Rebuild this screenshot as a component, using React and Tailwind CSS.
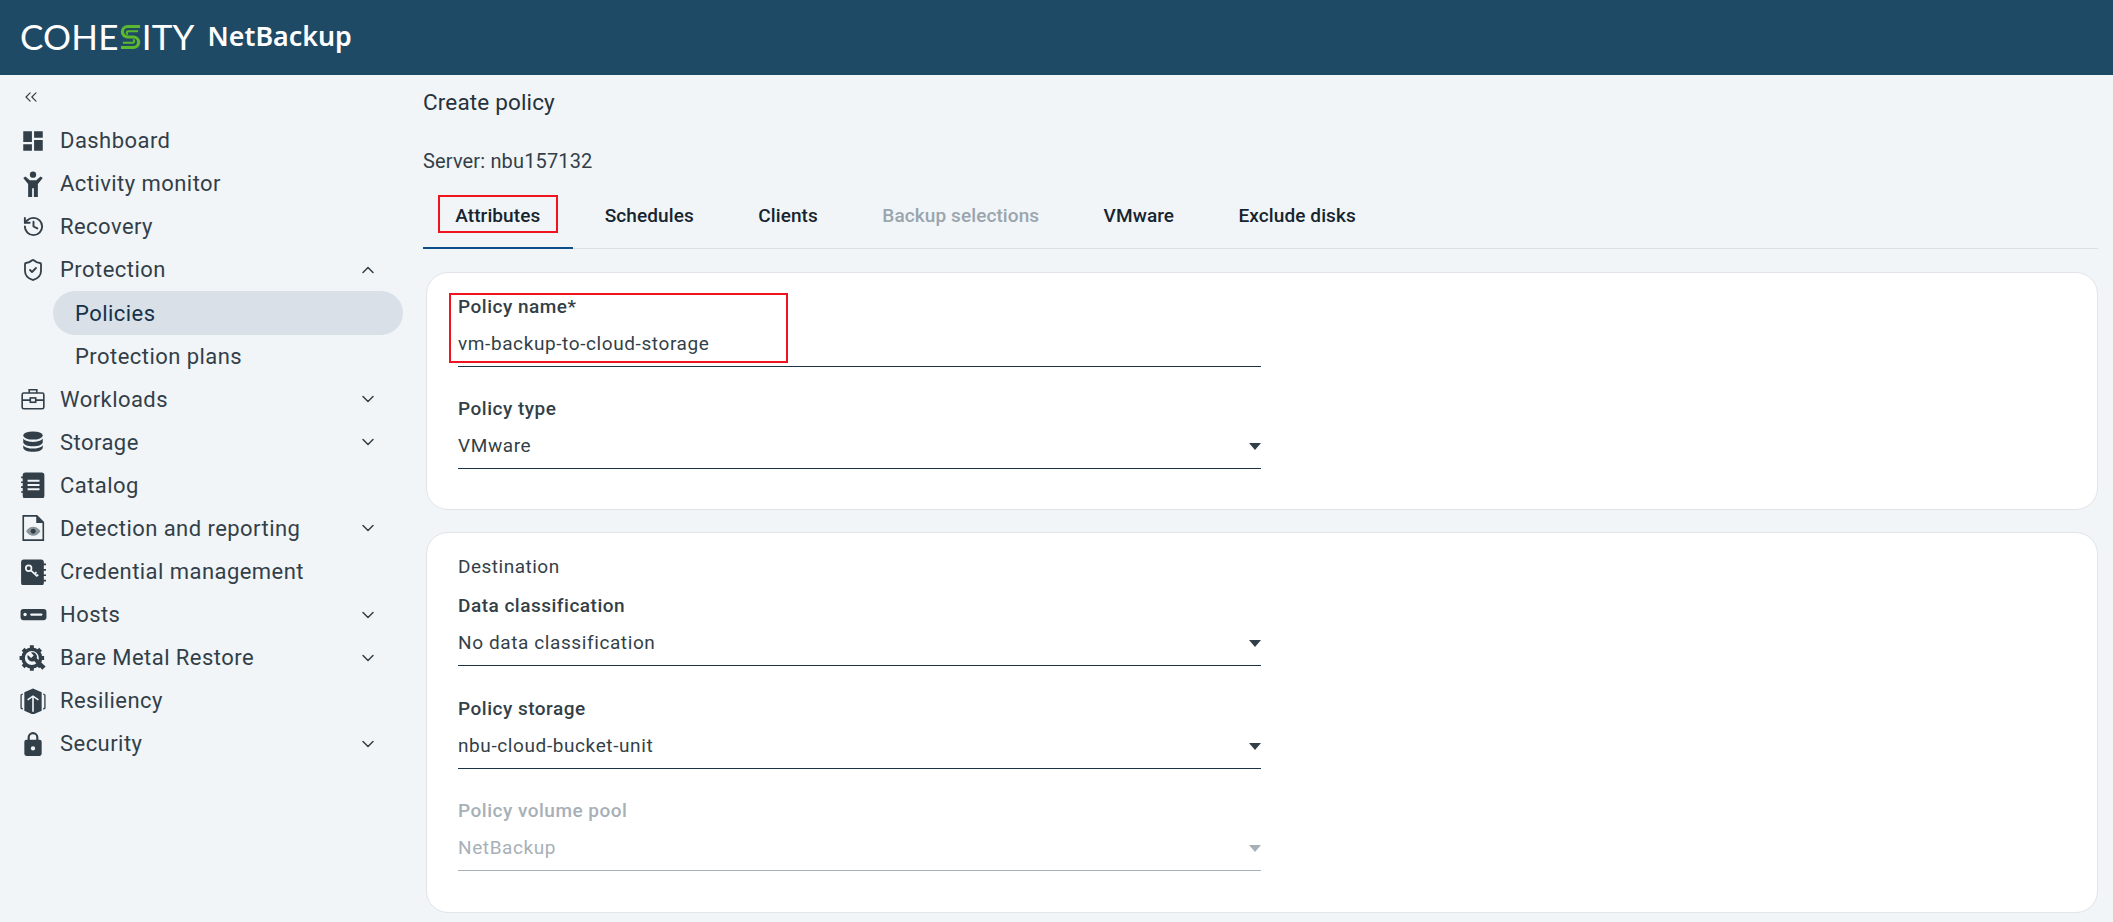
import { ChevronDown, ChevronUp, ChevronsLeft, History, ShieldCheck } from 'lucide-react';

const DashboardIcon = () => (
  <svg viewBox="0 0 24 24" className="w-[26px] h-[26px]" fill="currentColor">
    <path d="M3 13h8V3H3v10zm0 8h8v-6H3v6zm10 0h8V11h-8v10zm0-18v6h8V3h-8z" />
  </svg>
);

const ActivityIcon = () => (
  <svg viewBox="0 0 24 24" className="w-[26px] h-[26px]" fill="currentColor">
    <circle cx="12" cy="3.400" r="2.900" />
    <path d="M3 6.500 5 5l4 3.500h6l4-3.500 2 1.500-4.500 5.500v12h-3.700v-8h-1.600v8H7.500V12z" />
  </svg>
);

const RecoveryIcon = () => <History className="w-[23px] h-[23px]" strokeWidth={2} />;

const ShieldIcon = () => <ShieldCheck className="w-[24px] h-[24px]" strokeWidth={1.800} />;

const WorkloadsIcon = () => (
  <svg viewBox="0 0 24 24" className="w-[26px] h-[26px]" fill="none" stroke="currentColor" strokeWidth="1.500">
    <rect x="2" y="6.500" width="20" height="14.500" rx="1.500" />
    <path d="M8.500 6.500V3.500h7v3M2 13h7.500M14.500 13H22" />
    <rect x="9.500" y="11" width="5" height="4" />
  </svg>
);

const StorageIcon = () => (
  <svg viewBox="0 0 24 24" className="w-[26px] h-[26px]" fill="currentColor">
    <ellipse cx="12" cy="6" rx="9" ry="3.800" />
    <path d="M3 8.800c1.200 2 5 3.100 9 3.100s7.800-1.100 9-3.100v3.400c0 2.100-4 3.800-9 3.800s-9-1.700-9-3.800z" />
    <path d="M3 15c1.200 2 5 3.100 9 3.100s7.800-1.100 9-3.100v2.200c0 2.100-4 3.800-9 3.800s-9-1.700-9-3.800z" />
  </svg>
);

const CatalogIcon = () => (
  <svg viewBox="0 0 24 24" className="w-[26px] h-[26px]">
    <rect x="2.500" y="0.500" width="20" height="24" rx="2.500" fill="currentColor" />
    <path d="M1 5h3M1 9.500h3M1 14h3M1 18.500h3" stroke="currentColor" strokeWidth="1.500" />
    <path d="M7 7h11M7 11h11M7 15h11" stroke="#f1f5f8" strokeWidth="1.800" transform="translate(0 1)" />
  </svg>
);

const DetectionIcon = () => (
  <svg viewBox="0 0 24 24" className="w-[26px] h-[26px]">
    <path d="M3 0.800h12.500L21.500 6.800V23.200H3z" fill="none" stroke="currentColor" strokeWidth="1.500" />
    <path d="M15 0.800v6.500h6.500z" fill="currentColor" />
    <path d="M5.500 15c2-3 4.200-4.200 6.700-4.200s4.700 1.200 6.700 4.200c-2 3-4.200 4.200-6.700 4.200S7.500 18 5.500 15z" fill="#8a949b" />
    <circle cx="12.200" cy="15" r="2.300" fill="currentColor" />
  </svg>
);

const CredentialIcon = () => (
  <svg viewBox="0 0 24 24" className="w-[26px] h-[26px]">
    <rect x="1" y="0.500" width="21" height="24" rx="2.500" fill="currentColor" />
    <path d="M21 5h3M21 10h3M21 15h3M21 20h3" stroke="currentColor" strokeWidth="1.500" />
    <circle cx="8" cy="8.500" r="2.600" fill="none" stroke="#f1f5f8" strokeWidth="1.600" />
    <path d="m10 10.500 6 5.500m-2.500-2.300 1.800-1.600m0 3.700 1.500-1.400" stroke="#f1f5f8" strokeWidth="1.600" fill="none" />
  </svg>
);

const HostsIcon = () => (
  <svg viewBox="0 0 24 24" className="w-[27px] h-[27px]">
    <rect x="0.500" y="7" width="23" height="10" rx="2.500" fill="currentColor" />
    <circle cx="4.500" cy="12" r="1.500" fill="#f1f5f8" />
    <rect x="9" y="11" width="11" height="2" rx="1" fill="#f1f5f8" />
  </svg>
);

const BareMetalIcon = () => (
  <svg viewBox="0 0 24 24" className="w-[28px] h-[28px]">
    <circle cx="11" cy="12" r="7.500" fill="none" stroke="currentColor" strokeWidth="3" />
    <path
      d="M11 1v4M11 19v4M0.500 12h4M17.500 12h4M3.500 4.500l3 3M15.500 16.500l3 3M18.500 4.500l-3 3M6.500 16.500l-3 3"
      stroke="currentColor"
      strokeWidth="3.400"
    />
    <path d="M7.500 9.500a4 4 0 0 0 5.500 5l7 7.500 2.800-2.800-7.600-7a4 4 0 0 0-5-5l2.400 2.600-2.200 2.200z" fill="currentColor" />
  </svg>
);

const ResiliencyIcon = () => (
  <svg viewBox="0 0 24 24" className="w-[26px] h-[26px]">
    <path d="M12 0.500 20 4v17l-8 3.500L4 21V4z" fill="currentColor" />
    <path d="M2.500 5.500 1 6.500v12l1.500 1M21.500 5.500l1.500 1v12l-1.500 1" fill="none" stroke="currentColor" strokeWidth="1.200" />
    <path d="M12 22V7.500M7 11l5-3.500 5 3.500" fill="none" stroke="#f1f5f8" strokeWidth="1.500" />
  </svg>
);

const LockIcon = () => (
  <svg viewBox="0 0 24 24" className="w-[26px] h-[26px]" fill="currentColor">
    <path d="M18 8h-1V6A5 5 0 0 0 7 6v2H6a2 2 0 0 0-2 2v11a2 2 0 0 0 2 2h12a2 2 0 0 0 2-2V10a2 2 0 0 0-2-2zM9 6a3 3 0 0 1 6 0v2H9zm3 12a2 2 0 1 1 0-4 2 2 0 0 1 0 4z" />
  </svg>
);

const navItems = [
  { label: 'Dashboard', icon: DashboardIcon },
  { label: 'Activity monitor', icon: ActivityIcon },
  { label: 'Recovery', icon: RecoveryIcon },
  { label: 'Protection', icon: ShieldIcon, chevron: 'up' },
  { label: 'Policies', child: true, active: true },
  { label: 'Protection plans', child: true },
  { label: 'Workloads', icon: WorkloadsIcon, chevron: 'down' },
  { label: 'Storage', icon: StorageIcon, chevron: 'down' },
  { label: 'Catalog', icon: CatalogIcon },
  { label: 'Detection and reporting', icon: DetectionIcon, chevron: 'down' },
  { label: 'Credential management', icon: CredentialIcon },
  { label: 'Hosts', icon: HostsIcon, chevron: 'down' },
  { label: 'Bare Metal Restore', icon: BareMetalIcon, chevron: 'down' },
  { label: 'Resiliency', icon: ResiliencyIcon },
  { label: 'Security', icon: LockIcon, chevron: 'down' },
];

const tabs = [
  { label: 'Attributes', active: true },
  { label: 'Schedules' },
  { label: 'Clients' },
  { label: 'Backup selections', disabled: true },
  { label: 'VMware' },
  { label: 'Exclude disks' },
];

function NavRow({ item }) {
  const Icon = item.icon;

  if (item.child) {
    return (
      <div
        className={`ml-[53px] mr-3 h-[43.100px] flex items-center pl-[22px] rounded-full text-[22px] tracking-[0.45px] ${
          item.active ? 'bg-[#d9e0e7] text-[#16324a]' : 'text-[#333f48]'
        }`}
      >
        {item.label}
      </div>
    );
  }

  return (
    <div className="h-[43.100px] flex items-center text-[22px] tracking-[0.45px] text-[#333f48]">
      <span className="w-[60px] pl-[14px] pr-[8px] flex justify-center shrink-0">
        <Icon />
      </span>
      <span className="flex-1">{item.label}</span>
      {item.chevron === 'up' && <ChevronUp className="w-[20px] h-[20px] mr-[37px]" strokeWidth={1.800} />}
      {item.chevron === 'down' && <ChevronDown className="w-[20px] h-[20px] mr-[37px]" strokeWidth={1.800} />}
    </div>
  );
}

function Field({ label, value, select, disabled, highlight, className }) {
  return (
    <div className={`relative w-[803px] ${className || ''}`}>
      <div className={`h-[28px] flex items-center text-[19px] font-medium tracking-[0.5px] ${disabled ? 'text-[#a7b0b7]' : 'text-[#333f48]'}`}>
        {label}
      </div>
      <div
        className={`mt-[2px] h-[44px] flex items-center justify-between border-b text-[19px] tracking-[0.6px] ${
          disabled ? 'border-[#a7b0b7] text-[#a7b0b7]' : 'border-[#1c3344] text-[#333f48]'
        }`}
      >
        <span>{value}</span>
        {select && (
          <span
            className={`w-0 h-0 border-x-[6.500px] border-x-transparent border-t-[7px] ${
              disabled ? 'border-t-[#a7b0b7]' : 'border-t-[#333f48]'
            }`}
          />
        )}
      </div>
      {highlight && <span className="absolute left-[-9px] top-0 w-[339px] h-[70px] border-2 border-[#f0141e]" />}
    </div>
  );
}

function App() {
  return (
    <div className="h-screen overflow-hidden flex flex-col bg-[#f1f5f8] font-['Roboto',sans-serif]">
      <header className="h-[75px] shrink-0 bg-[#1f4a66] flex items-center pl-[20px] pb-[2px] text-white">
        <div className="flex items-center font-['Lato',sans-serif] text-[35px] leading-none tracking-[0.2px]">
          <span>COHE</span>
          <svg viewBox="0 0 22 26" className="w-[21px] h-[26px] mx-[1px]" fill="none" stroke="#5cb82c">
            <path d="M21 2H8a5.500 5.500 0 0 0 0 11h6a5.500 5.500 0 0 1 0 11H1" strokeWidth="3.400" />
            <path d="M19 7H8.500a1.500 1.500 0 0 0 0 3" strokeWidth="2" />
            <path d="M3 19h10.500a1.500 1.500 0 0 0 0-3" strokeWidth="2" />
          </svg>
          <span>ITY</span>
        </div>
        <span className="ml-[13px] font-['Noto_Sans',sans-serif] font-semibold text-[26.800px] leading-none">NetBackup</span>
      </header>

      <div className="flex-1 flex min-h-0">
        <aside className="w-[415px] shrink-0">
          <div className="h-[44.100px] pb-[1px] flex items-center pl-[21px] text-[#333f48]">
            <ChevronsLeft className="w-[20px] h-[20px]" strokeWidth={1.400} />
          </div>
          {navItems.map((item) => (
            <NavRow key={item.label} item={item} />
          ))}
        </aside>

        <main className="flex-1 min-w-0 pl-[8px] pr-[15px]">
          <h1 className="mt-[14px] h-[28px] flex items-center text-[22.500px] font-normal tracking-[0.15px] text-[#26323b]">Create policy</h1>
          <p className="mt-[30px] h-[28px] flex items-center text-[20px] tracking-[0.15px] text-[#333f48]">Server: nbu157132</p>

          <div className="mt-[12px] h-[62px] flex border-b border-[#d9dfe4]">
            {tabs.map((tab) => (
              <div
                key={tab.label}
                className={`relative px-[32.200px] pb-[2px] flex items-center text-[19px] font-medium tracking-[0.1px] ${
                  tab.disabled ? 'text-[#9aa5ad]' : 'text-[#16242f]'
                }`}
              >
                {tab.label}
                {tab.active && (
                  <>
                    <span className="absolute left-[15px] top-[8px] w-[120px] h-[38px] border-2 border-[#f0141e]" />
                    <span className="absolute left-0 right-0 bottom-[-1px] h-[2px] bg-[#0b4f8a]" />
                  </>
                )}
              </div>
            ))}
          </div>

          <section className="mt-[23px] ml-[3px] h-[238px] rounded-[22px] border border-[#e1e4e8] bg-white pl-[31px] pt-[20px]">
            <Field label="Policy name*" value="vm-backup-to-cloud-storage" highlight />
            <Field label="Policy type" value="VMware" select className="mt-[28px]" />
          </section>

          <section className="mt-[22px] ml-[3px] h-[381px] rounded-[22px] border border-[#e1e4e8] bg-white pl-[31px] pt-[20px]">
            <h2 className="h-[28px] flex items-center text-[19px] tracking-[0.5px] text-[#333f48]">Destination</h2>
            <Field label="Data classification" value="No data classification" select className="mt-[11px]" />
            <Field label="Policy storage" value="nbu-cloud-bucket-unit" select className="mt-[29px]" />
            <Field label="Policy volume pool" value="NetBackup" select disabled className="mt-[28px]" />
          </section>
        </main>
      </div>
    </div>
  );
}

export default App;
